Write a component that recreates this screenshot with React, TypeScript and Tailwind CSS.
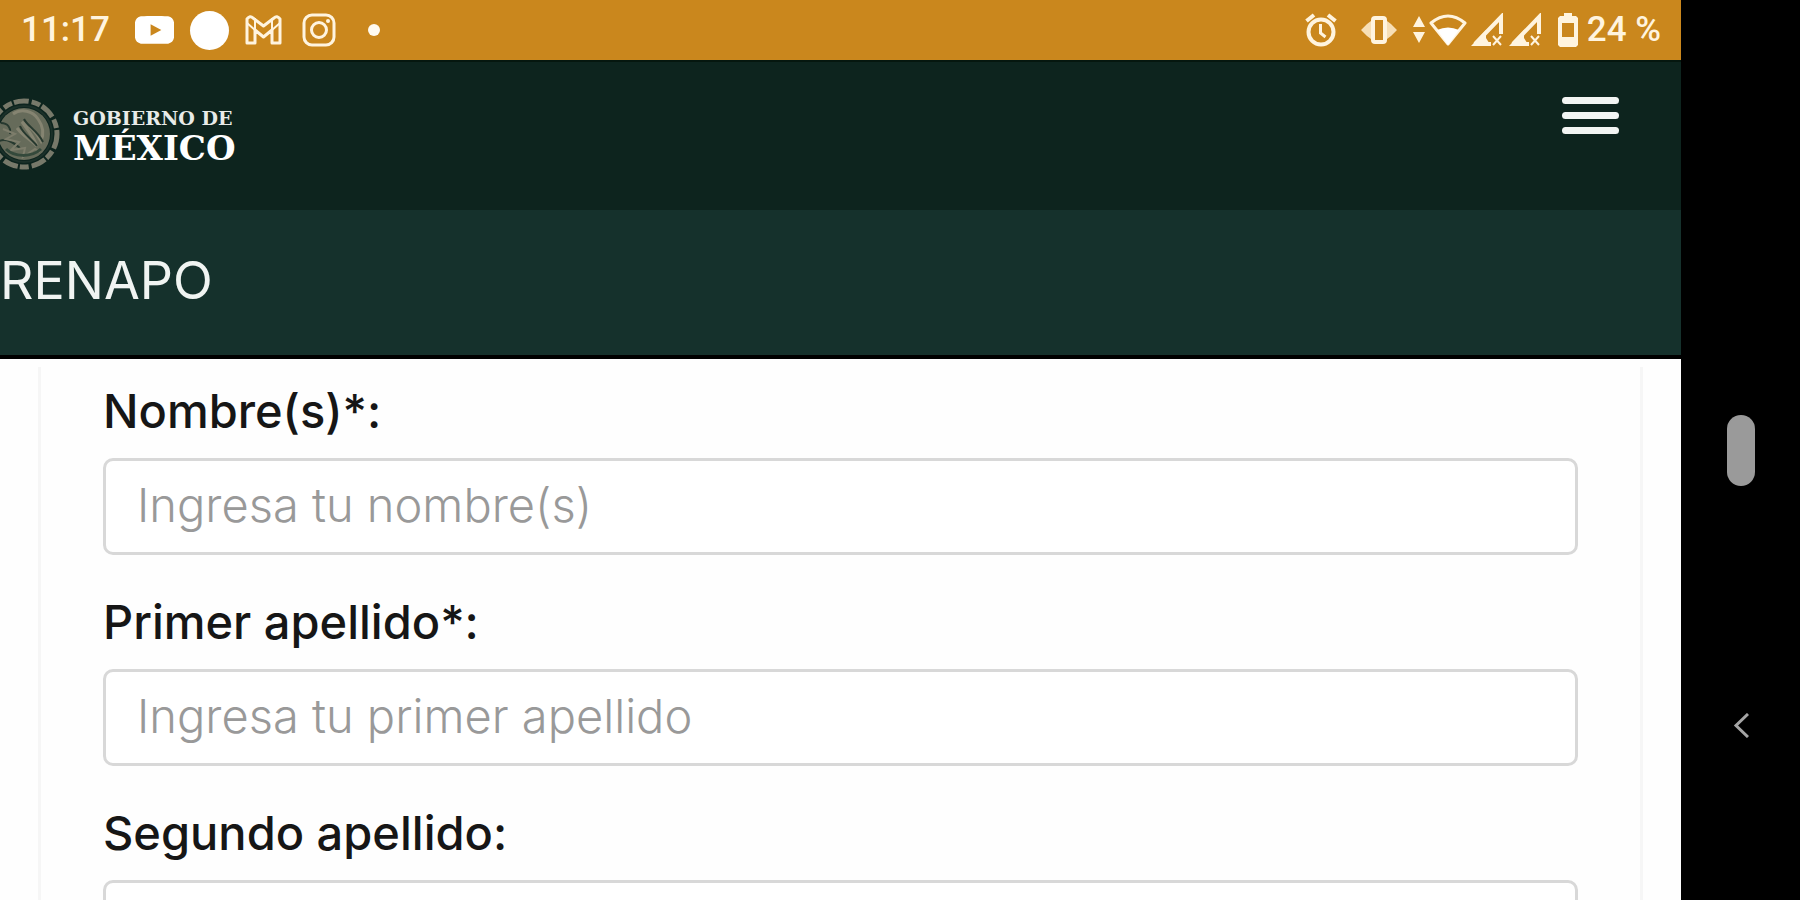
import type { ReactNode } from "react";

function Emblem() {
  return (
    <svg width="61" height="74" viewBox="13 0 61 74" fill="none" aria-hidden="true">
      <circle cx="37" cy="37" r="26" fill="#666b5a" />
      <circle cx="37" cy="37" r="33" stroke="#77796a" strokeWidth="5" strokeDasharray="15 3 9 2" />
      <circle cx="37" cy="37" r="28" stroke="#1b3029" strokeWidth="2" />
      <path d="M26 17c8-6 20-3 25 5 5 7 6 15 3 22-5-9-11-15-19-19 5 7 10 12 15 24-7-7-14-10-20-18" stroke="#858471" strokeWidth="3" />
      <path d="M37 22c3 7 13 11 19 23M33 29c3 8 12 13 17 20M14 26c7 0 10 5 9 11M12 44c8-3 15 2 21 7" stroke="#27392f" strokeWidth="2" />
      <path d="M16 32l12 5-9 5 13 3-8 8 14-2-2 9 12-8 5 3" stroke="#7d7d6b" strokeWidth="2" />
      <path d="M19 52c8 8 25 9 35 0" stroke="#34493b" strokeWidth="3" />
    </svg>
  );
}

function Signal() {
  return (
    <svg width="33" height="34" viewBox="0 0 33 34" fill="none" aria-hidden="true">
      <path d="M4 31 30 4V21M4 31H20" stroke="#fff4df" strokeWidth="4" />
      <path d="M0 33 15 17V25L20 33Z" fill="#fff4df" />
      <path d="m22 23 8 9m0-9-8 9" stroke="#fff4df" strokeWidth="2" />
    </svg>
  );
}

function StatusBar() {
  return (
    <div className="flex h-[60px] shrink-0 items-center justify-between bg-[#ca871d] pr-5 pl-[21px] font-[Roboto,sans-serif] text-[35px] leading-[60px] font-medium text-[#fff4df]">
      <div className="flex items-center">
        <span className="w-[114px]">11:17</span>
        <svg className="mr-4" width="39" height="28" viewBox="0 0 40 28" aria-hidden="true">
          <path fillRule="evenodd" fill="#fff" d="M6 0Q20-1 34 0q5 1 6 6v16q-1 5-6 6H6q-5-1-6-6V6q1-5 6-6Zm10 8v12l11-6Z" />
        </svg>
        <span className="mr-4 size-[39px] rounded-full bg-white" />
        <svg className="mr-5" width="37" height="30" viewBox="0 0 37 30" fill="none" stroke="#fff4df" strokeWidth="3" strokeLinejoin="round" aria-hidden="true">
          <path d="M2 4q3-4 6-1l10.500 8L29 3q3-3 6 1v24h-8V15l-8.500 7L10 15v13H2Z" />
          <path d="M10 3v12M27 3v12M2 8l8 7M35 8l-8 7" strokeWidth="2" />
        </svg>
        <svg className="mr-8" width="34" height="34" viewBox="0 0 34 34" fill="none" stroke="#fff4df" strokeWidth="3" aria-hidden="true">
          <rect x="2" y="2" width="30" height="30" rx="8" />
          <circle cx="17" cy="17" r="7.500" />
          <circle cx="26" cy="8" r="2" fill="#fff4df" stroke="none" />
        </svg>
        <span className="size-3 rounded-full bg-[#fffaf0]" />
      </div>
      <div className="flex items-center">
        <svg className="mr-6" width="32" height="34" viewBox="0 0 32 34" fill="none" stroke="#fff4df" strokeWidth="4" aria-hidden="true">
          <circle cx="16" cy="19" r="12.500" />
          <path d="M1.500 8 9 2m14 0 7.500 6" />
          <path d="M15.500 11v9l5 4" strokeWidth="3" />
        </svg>
        <svg className="mr-4" width="36" height="28" viewBox="0 0 36 28" aria-hidden="true">
          <path d="M10 5v18L6 20 0 14 6 8ZM26 5v18l4-3 6-6-6-6Z" fill="#f7dfb6" />
          <rect x="12" y="2" width="12" height="24" rx="2" fill="none" stroke="#fff4df" strokeWidth="4" />
        </svg>
        <svg className="mr-1" width="12" height="28" viewBox="0 0 12 28" fill="#fff4df" aria-hidden="true">
          <path d="M6 0l6 11H0ZM6 27l6-11H0Z" />
        </svg>
        <svg className="mr-1" width="38" height="32" viewBox="0 0 38 32" aria-hidden="true">
          <path d="M2 9Q19-5 36 9L19 30Z" fill="none" stroke="#fff4df" strokeWidth="3" strokeLinejoin="round" />
          <path d="M8 16q11-5 22 0L19 31Z" fill="#fff" />
        </svg>
        <span className="flex gap-[5px]"><Signal /><Signal /></span>
        <svg className="mr-[9px] ml-4" width="20" height="34" viewBox="0 0 20 34" aria-hidden="true">
          <path fillRule="evenodd" fill="#fff4df" d="M6 0h8v3h4l2 2v27l-2 2H2l-2-2V5l2-2h4ZM4 10v14h12V10Z" />
        </svg>
        <span>24 %</span>
      </div>
    </div>
  );
}

function Field({ id, label, placeholder }: { id: string; label: ReactNode; placeholder: string }) {
  return (
    <div className="mb-[30px]">
      <label htmlFor={id} className="block h-[84px] pt-[7px] text-[47px] leading-[60px] font-medium whitespace-nowrap text-[#161616]">
        {label}
      </label>
      <input
        id={id}
        type="text"
        placeholder={placeholder}
        className="block h-[97px] w-full rounded-[10px] border-[3px] border-[#d8d8d8] bg-white px-[31px] pb-1 text-[47px] font-light text-[#333] placeholder:text-[#999]"
      />
    </div>
  );
}

export default function App() {
  return (
    <div className="flex h-screen overflow-hidden bg-black font-[Inter,sans-serif]">
      <div className="flex min-w-0 flex-1 flex-col">
        <StatusBar />
        <header className="flex h-[150px] shrink-0 items-start justify-between border-t-2 border-[#05170f] bg-[#0d241e] pr-[62px]">
          <a href="#inicio" className="flex items-center gap-3 pt-[35px] font-['DejaVu_Serif',serif] font-bold text-white">
            <Emblem />
            <span className="flex flex-col pt-1">
              <span className="text-[19px] leading-[24px] text-[#e8ebe8]">GOBIERNO DE</span>
              <span className="text-[34px] leading-[36px]">MÉXICO</span>
            </span>
          </a>
          <button type="button" aria-label="Abrir menú" className="flex w-[57px] flex-col gap-2 pt-[35px]">
            <span className="h-[7px] rounded-sm bg-[#f2f5f3]" />
            <span className="h-[7px] rounded-sm bg-[#f2f5f3]" />
            <span className="h-[7px] rounded-sm bg-[#f2f5f3]" />
          </button>
        </header>
        <nav className="flex h-[149px] shrink-0 items-center border-b-4 border-black bg-[#15312c] pb-1">
          <a href="#renapo" className="text-[52px] leading-[60px] font-normal text-[#f0f4f2]">RENAPO</a>
        </nav>
        <main className="min-h-0 flex-1 overflow-hidden bg-[#fefefe] px-[38px] pt-2">
          <form className="border-x-[3px] border-[#f6f6f6] px-[62px] pt-[7px]">
            <Field id="nombre" label="Nombre(s)*:" placeholder="Ingresa tu nombre(s)" />
            <Field id="primer" label="Primer apellido*:" placeholder="Ingresa tu primer apellido" />
            <Field id="segundo" label="Segundo apellido:" placeholder="Ingresa tu segundo apellido" />
          </form>
        </main>
      </div>
      <aside className="flex w-[119px] shrink-0 flex-col items-center bg-black pt-[415px]">
        <button type="button" aria-label="Inicio" className="h-[71px] w-7 rounded-full bg-[#9a9a9a]" />
        <button type="button" aria-label="Atrás" className="mt-[227px]">
          <svg width="16" height="25" viewBox="0 0 16 25" fill="none" stroke="#a5a5a5" strokeWidth="3" aria-hidden="true">
            <path d="M15 1 3 12.500 15 24" />
          </svg>
        </button>
      </aside>
    </div>
  );
}
